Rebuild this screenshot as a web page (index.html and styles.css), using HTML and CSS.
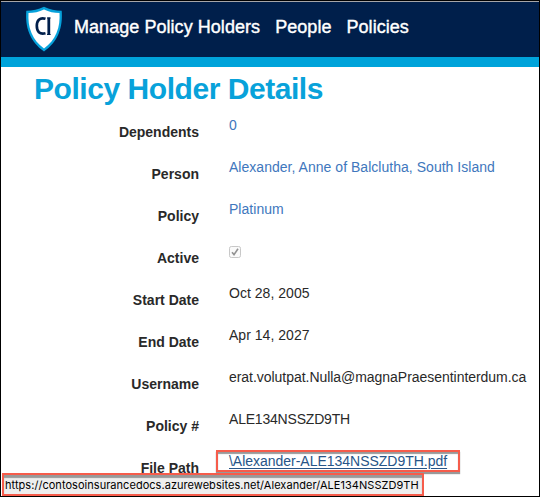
FILE: index.html
```html
<!DOCTYPE html>
<html lang="en">
<head>
<meta charset="utf-8">
<title>Policy Holder Details</title>
<link rel="stylesheet" href="styles.css">
</head>
<body>
<div class="window">
  <header class="navbar">
    <svg class="logo" viewBox="0 0 38 46" width="38" height="46" role="img" aria-label="CI">
      <path d="M19 .8C13.5 3.8 7.5 4.500 1.300 4.800C.7 12 1.200 20.500 4.500 28C7.500 35 12 40.500 19 45.500C26 40.500 30.500 35 33.500 28C36.800 20.500 37.300 12 36.700 4.800C30.500 4.500 24.500 3.800 19 .8Z" fill="#06a2db"/>
      <path d="M19 3.400C14 5.900 9 6.700 3.500 7C3.200 13.500 3.600 20.500 6.500 27C9.200 33.200 13 38 19 42.500C25 38 28.800 33.200 31.500 27C34.400 20.500 34.800 13.500 34.500 7C29 6.700 24 5.900 19 3.400Z" fill="#fff"/>
      <path d="M20.500 12.800C14.500 11 11.800 14.500 11.800 19.800C11.800 25.500 14.500 28.800 20.500 27.200" fill="none" stroke="#001f4b" stroke-width="2.700"/>
      <path d="M23.800 11.500V29" fill="none" stroke="#001f4b" stroke-width="2.800"/>
      <path d="M22 12h3.600M22 28.500h3.600" stroke="#001f4b"/>
    </svg>
    <nav class="links">
      <a>Manage Policy Holders</a>
      <a>People</a>
      <a>Policies</a>
    </nav>
  </header>
  <main>
    <h1>Policy Holder Details</h1>
    <dl>
      <dt>Dependents</dt><dd><a>0</a></dd>
      <dt>Person</dt><dd><a>Alexander, Anne of Balclutha, South Island</a></dd>
      <dt>Policy</dt><dd><a>Platinum</a></dd>
      <dt>Active</dt><dd><svg class="check" width="12" height="12" viewBox="0 0 12 12"><rect x=".5" y=".5" width="11" height="11" rx="1.800" fill="#fafafa" stroke="#c8c8c8"/><path d="M3 6.300L5 8.600L9 2.800" fill="none" stroke="#929292" stroke-width="1.600"/></svg></dd>
      <dt>Start Date</dt><dd>Oct 28, 2005</dd>
      <dt>End Date</dt><dd>Apr 14, 2027</dd>
      <dt>Username</dt><dd class="username">erat.volutpat.Nulla@magnaPraesentinterdum.ca</dd>
      <dt>Policy #</dt><dd class="number">ALE134NSSZD9TH</dd>
      <dt>File Path</dt><dd class="file"><a class="hovered">\Alexander-ALE134NSSZD9TH.pdf</a><span class="callout"></span></dd>
    </dl>
  </main>
  <div class="status"><span>https://contosoinsurancedocs.azurewebsites.net/Alexander/ALE134NSSZD9TH</span></div>
</div>
</body>
</html>
```
FILE: styles.css
```css
* { box-sizing: border-box; }
body {
  margin: 0;
  background: #fff;
  color: #292929;
  font: 14px/20px "Liberation Sans", Arial, sans-serif;
}
.window {
  position: relative;
  height: 497px;
  border: 1px solid #000;
  overflow: hidden;
}
.navbar {
  display: flex;
  align-items: flex-start;
  height: 66px;
  padding-left: 24px;
  border-top: 1px solid #a5a5a8;
  border-bottom: 10px solid #00a3da;
  background: #001f4b;
}
.logo { margin-top: 4px; }
.links {
  display: flex;
  gap: 15px;
  padding: 14px 0 0 11px;
  color: #fff;
  font-size: 18px;
  line-height: 22px;
  letter-spacing: .05px;
  -webkit-text-stroke: .4px #fff;
  white-space: nowrap;
}
h1 {
  margin: 5px 0 0 33px;
  color: #08a2da;
  font-size: 30px;
  line-height: 34px;
  letter-spacing: -.45px;
  white-space: nowrap;
}
dl {
  display: grid;
  grid-template-columns: 198px 1fr;
  column-gap: 30px;
  grid-auto-rows: 42px;
  margin: 9px 0 0;
}
dt {
  padding-top: 7px;
  text-align: right;
  font-weight: bold;
}
dd { margin: 0; white-space: nowrap; letter-spacing: .03px; }
dd a { color: #4077bd; }
.username { letter-spacing: -.04px; }
.number { letter-spacing: -.2px; }
.check { display: block; margin-top: 5px; }
.file { position: relative; letter-spacing: -.02px; }
.file .hovered {
  color: #275588;
  text-decoration: underline;
  text-underline-offset: 2px;
}
.callout {
  position: absolute;
  left: -13px;
  top: -1px;
  width: 244px;
  height: 22px;
  border: 2px solid #f65c4b;
  box-shadow: 0 2px 1px #999, inset 0 2px 1px #999;
}
.status {
  position: absolute;
  left: 1px;
  bottom: 0;
  width: 422px;
  height: 23px;
  padding-left: 1px;
  border: 2px solid #f65c4b;
  background: #eee;
  box-shadow: inset 0 3px 1px #999;
  color: #000;
  font: 11px/21px Inter, sans-serif;
  letter-spacing: .04px;
  white-space: nowrap;
}
```
